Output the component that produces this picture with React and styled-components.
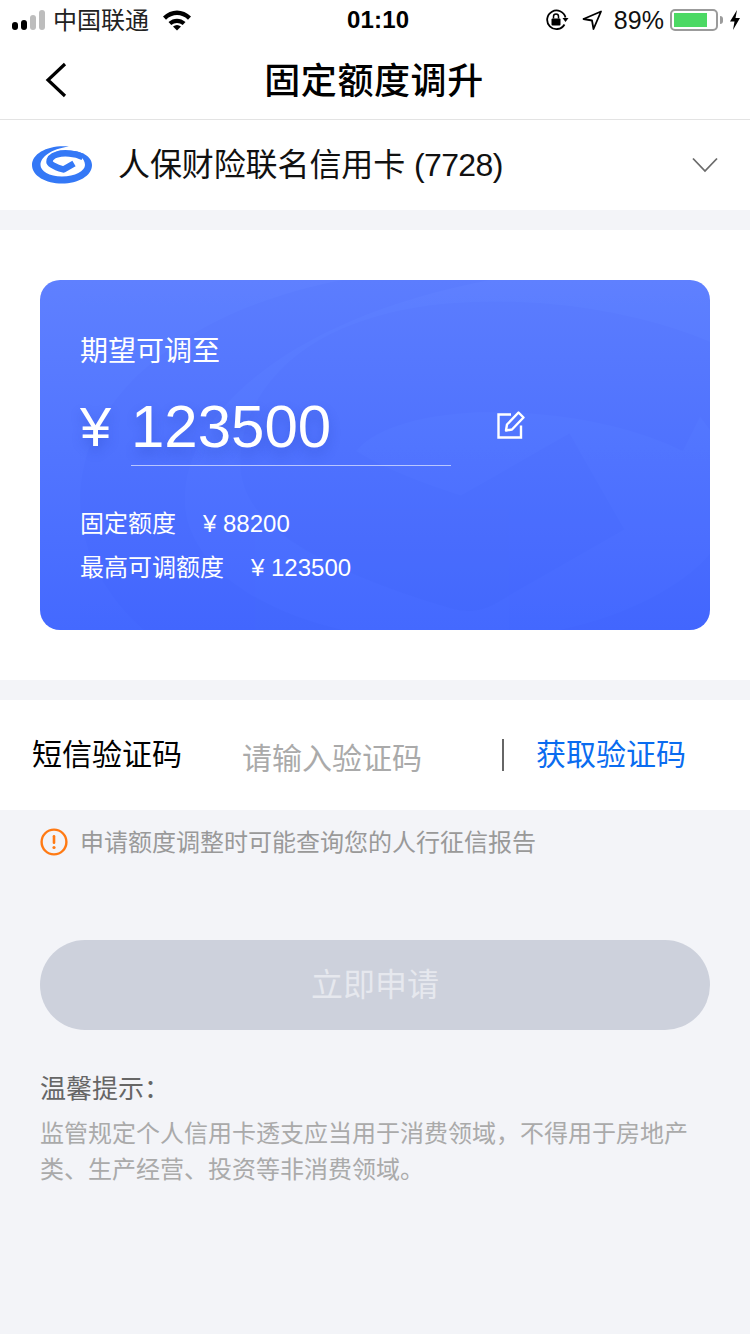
import styled, { createGlobalStyle } from 'styled-components'

const GlobalStyle = createGlobalStyle`
  html, body {
    margin: 0;
    padding: 0;
    background: #f3f4f8;
    font-family: "Liberation Sans", "Noto Sans CJK SC", sans-serif;
  }
`

// spiral mark, used for the small logo and the card watermark
function LogoMark({ color, width = 6.5 }) {
  return (
    <g>
      <path
        fill={color}
        d="M38 1.500C18 -.5 1 8 1 20C1 31 15 38.500 31 38.500C47 38.500 61 31 61 20C61 11 50 6 38 5.500C48 8 54 14 54 20C54 26 44 31.500 31 31.500C18 31.500 9.500 26 9.500 20C9.500 12 20 4 38 1.500Z"
      />
      <path
        fill="none"
        stroke={color}
        strokeWidth={width}
        strokeLinejoin="round"
        d="M52 12C44 8 32 7.500 26 9.500C21 11 18.500 14 18.500 17C18.500 19 24 22 32.500 24.500L43 18.500"
      />
    </g>
  )
}

function App() {
  return (
    <Page>
      <GlobalStyle />
      <StatusBar>
        <StatusLeft>
          <Signal>
            <Dot $on $h={8} /><Dot $on $h={10} /><Dot $h={15} /><Dot $h={20} />
          </Signal>
          <Carrier>中国联通</Carrier>
          <svg width="28" height="21" viewBox="0 0 28 21">
            <path d="M0 6.500C8 -1.500 20 -1.500 28 6.500L25 9.700C18.500 3.500 9.500 3.500 3 9.700Z" fill="#000" />
            <path d="M5.500 12C10.500 7.500 17.500 7.500 22.500 12L19.700 15C16.500 12.300 11.500 12.300 8.300 15Z" fill="#000" />
            <path d="M10 16.500C12.500 14.500 15.500 14.500 18 16.500L14 20.500Z" fill="#000" />
          </svg>
        </StatusLeft>
        <Clock>01:10</Clock>
        <StatusRight>
          <LockIcon width="24" height="22" viewBox="0 0 24 22">
            <path d="M20.500 8.500A9.300 9.300 0 1 0 19.500 15.500" fill="none" stroke="#000" strokeWidth="1.800" />
            <path d="M17.500 9L23.500 9L20.500 13Z" fill="#000" />
            <rect x="6.500" y="9.500" width="9" height="7" rx="1" fill="#000" />
            <path d="M8.500 9.500V7.500A2.500 2.500 0 0 1 13.500 7.500V9.500" fill="none" stroke="#000" strokeWidth="1.500" />
          </LockIcon>
          <svg width="20" height="20" viewBox="0 0 20 20">
            <path d="M19 1.500L11.500 19L10 10.500L1.500 9Z" fill="none" stroke="#000" strokeWidth="1.800" strokeLinejoin="round" />
          </svg>
          <Percent>89%</Percent>
          <Battery>
            <BatteryFill style={{ width: '82%' }} />
          </Battery>
          <BatteryCap />
          <svg width="12" height="20" viewBox="0 0 12 20">
            <path d="M8 0L1 11.500H5.500L4 20L11 8H6.500Z" fill="#000" />
          </svg>
        </StatusRight>
      </StatusBar>

      <NavBar>
        <BackIcon width="24" height="36" viewBox="0 0 24 36">
          <path d="M21 2L4 18L21 34" fill="none" stroke="#000" strokeWidth="3.200" />
        </BackIcon>
        <NavTitle>固定额度调升</NavTitle>
      </NavBar>

      <CardPicker>
        <svg width="62" height="40" viewBox="0 0 62 40">
          <LogoMark color="#3478f6" />
        </svg>
        <CardName>人保财险联名信用卡 <CardTail>(7728)</CardTail></CardName>
        <svg width="26" height="16" viewBox="0 0 26 16">
          <path d="M1 1.500L13 14L25 1.500" fill="none" stroke="#6b6b6b" strokeWidth="1.800" />
        </svg>
      </CardPicker>

      <CardSection>
        <QuotaCard>
          <Watermark viewBox="0 0 670 350">
            <g transform="translate(28 -26) scale(12.3)" opacity="0.04">
              <LogoMark color="#1f3fd8" width={9} />
            </g>
          </Watermark>
          <CardLabel>期望可调至</CardLabel>
          <AmountRow>
            <Currency>¥</Currency>
            <AmountField>123500</AmountField>
            <EditIcon width="30" height="30" viewBox="0 0 30 30">
              <path d="M15 4.500H2.500V27.500H25V15.500" fill="none" stroke="#fff" strokeWidth="2.400" />
              <path d="M10 20.500L11 14.500L22.500 2.500L27.500 7.500L16 19.500Z" fill="none" stroke="#fff" strokeWidth="2.400" strokeLinejoin="round" />
            </EditIcon>
          </AmountRow>
          <QuotaRow $first>固定额度<QuotaValue>¥ 88200</QuotaValue></QuotaRow>
          <QuotaRow>最高可调额度<QuotaValue>¥ 123500</QuotaValue></QuotaRow>
        </QuotaCard>
      </CardSection>

      <CodeRow>
        <CodeLabel>短信验证码</CodeLabel>
        <CodeInput>请输入验证码</CodeInput>
        <Divider />
        <CodeLink>获取验证码</CodeLink>
      </CodeRow>

      <Notice>
        <svg width="28" height="28" viewBox="0 0 28 28">
          <circle cx="14" cy="14" r="12.400" fill="none" stroke="#ff7a14" strokeWidth="2.400" />
          <rect x="12.700" y="7" width="2.600" height="9" rx="1.300" fill="#ff7a14" />
          <circle cx="14" cy="19.500" r="1.600" fill="#ff7a14" />
        </svg>
        <NoticeText>申请额度调整时可能查询您的人行征信报告</NoticeText>
      </Notice>

      <ApplyButton>立即申请</ApplyButton>

      <Tips>
        <TipsTitle>温馨提示：</TipsTitle>
        <TipsBody>监管规定个人信用卡透支应当用于消费领域，不得用于房地产类、生产经营、投资等非消费领域。</TipsBody>
      </Tips>
    </Page>
  )
}

export default App

const Page = styled.div`
  width: 750px;
  height: 1334px;
  background: #f3f4f8;
  overflow: hidden;
`

const StatusBar = styled.div`
  height: 40px;
  background: #fff;
  display: flex;
  align-items: center;
  justify-content: space-between;
  padding: 0 9px 0 12px;
  position: relative;
`

const StatusLeft = styled.div`
  display: flex;
  align-items: center;
`

const Signal = styled.div`
  display: flex;
  align-items: flex-end;
  gap: 3px;
  height: 20px;
`

const Dot = styled.span`
  width: 6px;
  height: ${props => props.$h}px;
  border-radius: 3px;
  background: ${props => props.$on ? '#000' : '#bdbdbd'};
`

const Carrier = styled.span`
  font-size: 24px;
  color: #222;
  margin: 0 14px 0 8px;
  padding-bottom: 4px;
`

const Clock = styled.span`
  position: absolute;
  left: 347px;
  top: 5px;
  font-size: 24px;
  line-height: 30px;
  font-weight: 600;
  letter-spacing: 0.2px;
  color: #000;
`

const StatusRight = styled.div`
  display: flex;
  align-items: center;
`

const LockIcon = styled.svg`
  margin-right: 13px;
`

const Percent = styled.span`
  font-size: 25px;
  color: #111;
  margin: 0 6px 0 12px;
  letter-spacing: 0.1px;
`

const Battery = styled.div`
  width: 48px;
  height: 22px;
  box-sizing: border-box;
  border: 2px solid #9b9b9b;
  border-radius: 5px;
  padding: 2px;
`

const BatteryFill = styled.div`
  height: 100%;
  background: #4cd964;
`

const BatteryCap = styled.div`
  width: 3px;
  height: 8px;
  margin: 0 6px 0 2px;
  background: #9b9b9b;
  border-radius: 0 3px 3px 0;
`

const NavBar = styled.div`
  height: 79px;
  background: #fff;
  border-bottom: 1px solid #e3e3e3;
  display: flex;
  align-items: center;
  justify-content: center;
  position: relative;
`

const BackIcon = styled.svg`
  position: absolute;
  left: 44px;
  top: 22px;
`

const NavTitle = styled.div`
  font-size: 36px;
  font-weight: 500;
  color: #000;
  letter-spacing: 0.6px;
  padding: 0 2px 4px 0;
`

const CardPicker = styled.div`
  height: 90px;
  background: #fff;
  display: flex;
  align-items: center;
  padding: 0 32px 0 31px;
`

const CardName = styled.div`
  flex: 1;
  margin-left: 25px;
  padding-bottom: 6px;
  font-size: 32px;
  letter-spacing: -0.1px;
  color: #111;
`

const CardTail = styled.span`
  letter-spacing: -0.6px;
`

const CardSection = styled.div`
  margin-top: 20px;
  height: 450px;
  box-sizing: border-box;
  padding: 50px 40px;
  background: #fff;
`

const QuotaCard = styled.div`
  height: 350px;
  box-sizing: border-box;
  padding: 52px 40px 0;
  border-radius: 20px;
  background: linear-gradient(180deg, #5f80ff 0%, #4469ff 100%);
  position: relative;
  overflow: hidden;
  color: #fff;
`

const Watermark = styled.svg`
  position: absolute;
  left: 0;
  top: 0;
  width: 670px;
  height: 350px;
`

const CardLabel = styled.div`
  position: relative;
  font-size: 28px;
  line-height: 40px;
`

const AmountRow = styled.div`
  position: relative;
  display: flex;
  align-items: flex-start;
  height: 74px;
  margin-top: 20px;
`

const Currency = styled.div`
  width: 51px;
  font-size: 56px;
  line-height: 70px;
  text-shadow: 0 6px 12px rgba(30, 60, 180, 0.3);
`

const AmountField = styled.div`
  width: 320px;
  height: 74px;
  box-sizing: border-box;
  border-bottom: 1px solid rgba(255, 255, 255, 0.6);
  font-size: 60px;
  line-height: 70px;
  text-shadow: 0 6px 12px rgba(30, 60, 180, 0.3);
`

const EditIcon = styled.svg`
  margin: 18px 0 0 45px;
`

const QuotaRow = styled.div`
  position: relative;
  font-size: 24px;
  line-height: 44px;
  margin-top: ${props => props.$first ? '36px' : '0'};
`

const QuotaValue = styled.span`
  margin-left: 27px;
`

const CodeRow = styled.div`
  margin-top: 20px;
  height: 110px;
  background: #fff;
  display: flex;
  align-items: center;
  padding: 0 32px;
`

const CodeLabel = styled.div`
  width: 211px;
  padding-bottom: 6px;
  font-size: 30px;
  color: #000;
`

const CodeInput = styled.div`
  width: 259px;
  margin-left: -1px;
  font-size: 30px;
  color: #aaa;
  padding-top: 2px;
`

const Divider = styled.div`
  width: 2px;
  height: 32px;
  margin-left: 1px;
  background: #666;
`

const CodeLink = styled.div`
  margin-left: 32px;
  padding-bottom: 6px;
  font-size: 30px;
  color: #0a6cf0;
`

const Notice = styled.div`
  display: flex;
  align-items: center;
  height: 64px;
  padding-left: 40px;
`

const NoticeText = styled.div`
  margin-left: 12px;
  padding-bottom: 4px;
  font-size: 24px;
  color: #999;
`

const ApplyButton = styled.div`
  margin: 66px 40px 0;
  height: 90px;
  box-sizing: border-box;
  padding-bottom: 6px;
  border-radius: 45px;
  background: #cdd1dc;
  color: #e6e8ee;
  font-size: 32px;
  display: flex;
  align-items: center;
  justify-content: center;
`

const Tips = styled.div`
  margin: 41px 40px 0;
`

const TipsTitle = styled.div`
  font-size: 26px;
  line-height: 36px;
  color: #666;
`

const TipsBody = styled.div`
  margin-top: 9px;
  font-size: 24px;
  line-height: 36px;
  color: #aaa;
`
